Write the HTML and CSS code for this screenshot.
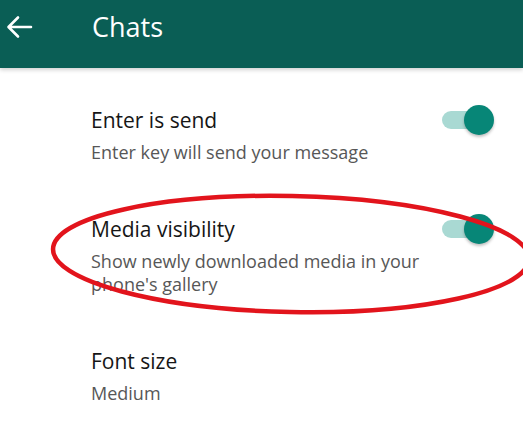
FILE: index.html
```html
<!DOCTYPE html>
<html lang="en">
<head>
    <meta charset="UTF-8">
    <meta name="viewport" content="width=device-width, initial-scale=1.0">
    <link rel="stylesheet" href="styles.css">
    <title>Chats</title>
</head>
<body>
<div class="screen">
    <div class="toolbar">
        <button class="back">
            <svg width="30" height="30" viewBox="0 0 30 30">
                <path d="M27 15H5M14 5.5L4.5 15L14 24.5" fill="none" stroke="#fff" stroke-width="2.6" stroke-linecap="round" stroke-linejoin="round"/>
            </svg>
        </button>
        <div class="toolbar-title">Chats</div>
    </div>

    <div class="settings">
        <div class="setting">
            <div class="setting-text">
                <div class="setting-title">Enter is send</div>
                <div class="setting-sub">Enter key will send your message</div>
            </div>
            <div class="switch on"><span class="knob"></span></div>
        </div>

        <div class="setting">
            <div class="setting-text">
                <div class="setting-title">Media visibility</div>
                <div class="setting-sub">Show newly downloaded media in your phone's gallery</div>
            </div>
            <div class="switch on"><span class="knob"></span></div>
        </div>

        <div class="setting">
            <div class="setting-text">
                <div class="setting-title">Font size</div>
                <div class="setting-sub">Medium</div>
            </div>
        </div>
    </div>

    <!-- red marker ring drawn over the screenshot -->
    <svg class="mark" width="523" height="430" viewBox="0 0 523 430">
        <ellipse cx="291" cy="254" rx="238" ry="58" transform="rotate(1.2 291 254)" fill="none" stroke="#e2141c" stroke-width="4.5"/>
    </svg>
</div>
</body>
</html>
```

FILE: styles.css
```css
body, html {
    margin: 0;
    padding: 0;
    height: 100%;
    background: #fff;
}

.screen {
    position: relative;
    width: 523px;
    height: 430px;
    overflow: hidden;
    font-family: "Open Sans", "Noto Sans", sans-serif;
}

.toolbar {
    height: 68px;
    box-sizing: border-box;
    padding-bottom: 14px;
    display: flex;
    align-items: center;
    background-color: #0a5e55;
    box-shadow: 0 2px 4px rgba(0, 0, 0, 0.18);
}

.back {
    width: 30px;
    height: 30px;
    margin-left: 4px;
    padding: 0;
    border: none;
    background: transparent;
    display: flex;
}

.toolbar-title {
    margin-left: 58px;
    color: #fff;
    font-size: 27px;
    line-height: 34px;
    font-weight: 500;
}

.settings {
    padding-top: 13px;
}

.setting {
    display: flex;
    align-items: flex-start;
    padding: 25px 0 26px 91px;
}

.setting-text {
    flex: 1;
    max-width: 345px;
}

.setting-title {
    font-size: 21px;
    line-height: 28px;
    color: #161616;
}

.setting-sub {
    margin-top: 7px;
    font-size: 18px;
    line-height: 23px;
    color: #575757;
}

.switch {
    position: relative;
    width: 44px;
    height: 18px;
    margin: 5px 0 0 6px;
    border-radius: 9px;
    background-color: #a9d9d3;
}

.switch .knob {
    position: absolute;
    top: -6px;
    right: -8px;
    width: 30px;
    height: 30px;
    border-radius: 50%;
    background-color: #078677;
    box-shadow: 0 2px 3px rgba(0, 0, 0, 0.25);
}

.mark {
    position: absolute;
    top: 0;
    left: 0;
    pointer-events: none;
}
```
